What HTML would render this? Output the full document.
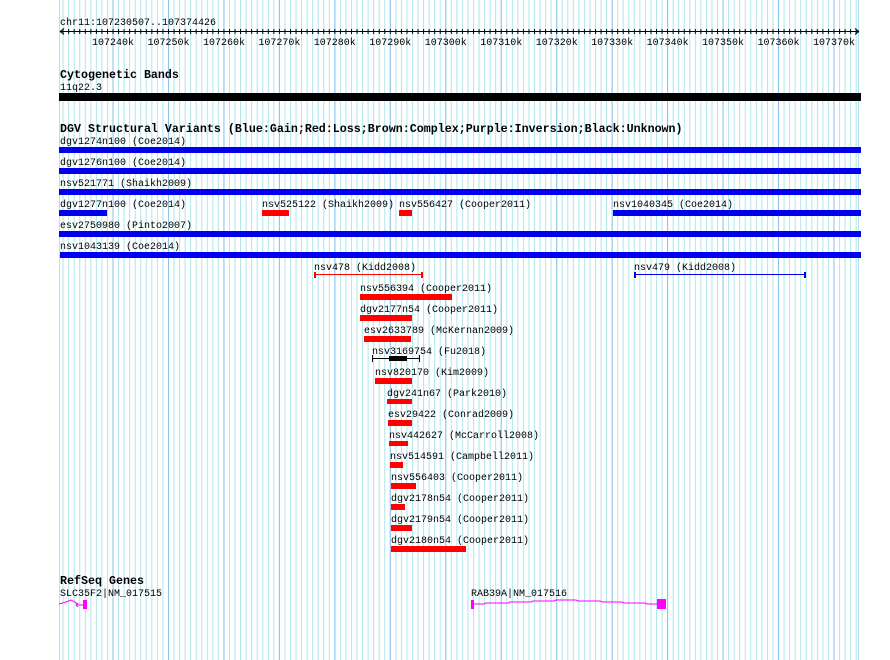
<!DOCTYPE html>
<html><head><meta charset="utf-8"><style>
html,body{margin:0;padding:0;background:#fff;width:890px;height:660px;overflow:hidden}
svg{display:block}
text{font-family:"Liberation Mono",monospace;font-size:10px;fill:#000}
.b{font-weight:bold;font-size:11.67px}
</style></head><body>
<svg width="890" height="660" viewBox="0 0 890 660" xmlns="http://www.w3.org/2000/svg">
<defs>
<pattern id="mn" patternUnits="userSpaceOnUse" x="62.6" y="0" width="5.546" height="660"><rect x="0" y="0" width="1" height="660" fill="#aee6ee"/></pattern>
<pattern id="mj" patternUnits="userSpaceOnUse" x="112.5" y="0" width="55.46" height="660"><rect x="0" y="0" width="1" height="660" fill="#8cc2ea"/></pattern>
</defs>
<rect x="59" y="0" width="801" height="660" fill="url(#mn)"/>
<rect x="59" y="0" width="801" height="660" fill="url(#mj)"/>
<rect x="59" y="0" width="1" height="660" fill="#aee6ee"/>
<rect x="858" y="0" width="1" height="660" fill="#aee6ee"/>

<text x="60" y="25">chr11:107230507..107374426</text>
<rect x="60" y="31" width="799" height="1" fill="#000"/>
<path d="M60 31.5 L64 28.5 M60 31.5 L64 34.5 M859 31.5 L855 28.5 M859 31.5 L855 34.5" stroke="#000" stroke-width="1"/>
<g id="ticks"></g>
<rect x="62.6" y="29" width="797" height="5" fill="url(#tk)"/>
<defs><pattern id="tk" patternUnits="userSpaceOnUse" x="62.6" y="29" width="5.546" height="5"><rect x="0" y="0" width="1" height="5" fill="#000"/></pattern></defs>
<g font-size="10">
<text x="113" y="45" text-anchor="middle">107240k</text>
<text x="168.5" y="45" text-anchor="middle">107250k</text>
<text x="224" y="45" text-anchor="middle">107260k</text>
<text x="279.4" y="45" text-anchor="middle">107270k</text>
<text x="334.8" y="45" text-anchor="middle">107280k</text>
<text x="390.3" y="45" text-anchor="middle">107290k</text>
<text x="445.8" y="45" text-anchor="middle">107300k</text>
<text x="501.2" y="45" text-anchor="middle">107310k</text>
<text x="556.7" y="45" text-anchor="middle">107320k</text>
<text x="612.1" y="45" text-anchor="middle">107330k</text>
<text x="667.6" y="45" text-anchor="middle">107340k</text>
<text x="723" y="45" text-anchor="middle">107350k</text>
<text x="778.5" y="45" text-anchor="middle">107360k</text>
<text x="834" y="45" text-anchor="middle">107370k</text>
</g>

<text class="b" x="60" y="78">Cytogenetic Bands</text>
<text x="60" y="90">11q22.3</text>
<rect x="59" y="93" width="802" height="8" fill="#000"/>

<text class="b" x="60" y="132">DGV Structural Variants (Blue:Gain;Red:Loss;Brown:Complex;Purple:Inversion;Black:Unknown)</text>
<text x="60" y="144">dgv1274n100 (Coe2014)</text>
<rect x="59" y="147" width="802" height="6" fill="#0000ee"/>
<text x="60" y="165">dgv1276n100 (Coe2014)</text>
<rect x="59" y="168" width="802" height="6" fill="#0000ee"/>
<text x="60" y="186">nsv521771 (Shaikh2009)</text>
<rect x="59" y="189" width="802" height="6" fill="#0000ee"/>
<text x="60" y="207">dgv1277n100 (Coe2014)</text>
<rect x="59" y="210" width="48" height="6" fill="#0000ee"/>
<text x="262" y="207">nsv525122 (Shaikh2009)</text>
<rect x="262" y="210" width="27" height="6" fill="#ff0000"/>
<text x="399" y="207">nsv556427 (Cooper2011)</text>
<rect x="399" y="210" width="13" height="6" fill="#ff0000"/>
<text x="613" y="207">nsv1040345 (Coe2014)</text>
<rect x="613" y="210" width="248" height="6" fill="#0000ee"/>
<text x="60" y="228">esv2750980 (Pinto2007)</text>
<rect x="59" y="231" width="802" height="6" fill="#0000ee"/>
<text x="60" y="249">nsv1043139 (Coe2014)</text>
<rect x="60" y="252" width="801" height="6" fill="#0000ee"/>

<text x="314" y="270">nsv478 (Kidd2008)</text>
<rect x="315" y="274" width="107" height="1" fill="#ff0000"/>
<rect x="314" y="272" width="2" height="6" fill="#ff0000"/>
<rect x="421" y="272" width="2" height="6" fill="#ff0000"/>
<text x="634" y="270">nsv479 (Kidd2008)</text>
<rect x="635" y="274" width="170" height="1" fill="#0000ee"/>
<rect x="634" y="272" width="2" height="6" fill="#0000ee"/>
<rect x="804" y="272" width="2" height="6" fill="#0000ee"/>

<text x="360" y="291">nsv556394 (Cooper2011)</text>
<rect x="360" y="294" width="92" height="6" fill="#ff0000"/>
<text x="360" y="312">dgv2177n54 (Cooper2011)</text>
<rect x="360" y="315" width="52" height="6" fill="#ff0000"/>
<text x="364" y="333">esv2633789 (McKernan2009)</text>
<rect x="364" y="336" width="47" height="6" fill="#ff0000"/>
<text x="372" y="354">nsv3169754 (Fu2018)</text>
<rect x="373" y="358" width="46" height="1" fill="#000"/>
<rect x="372" y="355" width="1" height="7" fill="#000"/>
<rect x="419" y="355" width="1" height="7" fill="#000"/>
<rect x="389" y="356" width="18" height="5" fill="#000"/>
<text x="375" y="375">nsv820170 (Kim2009)</text>
<rect x="375" y="378" width="37" height="6" fill="#ff0000"/>
<text x="387" y="396">dgv241n67 (Park2010)</text>
<rect x="387" y="399" width="25" height="5" fill="#ff0000"/>
<text x="388" y="417">esv29422 (Conrad2009)</text>
<rect x="388" y="420" width="24" height="6" fill="#ff0000"/>
<text x="389" y="438">nsv442627 (McCarroll2008)</text>
<rect x="389" y="441" width="19" height="5" fill="#ff0000"/>
<text x="390" y="459">nsv514591 (Campbell2011)</text>
<rect x="390" y="462" width="13" height="6" fill="#ff0000"/>
<text x="391" y="480">nsv556403 (Cooper2011)</text>
<rect x="391" y="483" width="25" height="6" fill="#ff0000"/>
<text x="391" y="501">dgv2178n54 (Cooper2011)</text>
<rect x="391" y="504" width="14" height="6" fill="#ff0000"/>
<text x="391" y="522">dgv2179n54 (Cooper2011)</text>
<rect x="391" y="525" width="21" height="6" fill="#ff0000"/>
<text x="391" y="543">dgv2180n54 (Cooper2011)</text>
<rect x="391" y="546" width="75" height="6" fill="#ff0000"/>

<text class="b" x="60" y="584">RefSeq Genes</text>
<text x="60" y="596">SLC35F2|NM_017515</text>
<path d="M59 604 L66 602 L71 600 L75 602 L78 605 L83 605" stroke="#ff00ff" fill="none" stroke-width="1"/>
<path d="M78 603 L76 605 L78 607" stroke="#ff00ff" fill="none"/>
<rect x="83" y="600" width="4" height="9" fill="#ff00ff"/>
<text x="471" y="596">RAB39A|NM_017516</text>
<rect x="471" y="600" width="3" height="9" fill="#ff00ff"/>
<path d="M474 604 L484 604 L486 603 L508 603 L510 602 L531 602 L533 601 L554 601 L556 600 L576 600 L578 601 L600 601 L602 602 L622 602 L624 603 L645 603 L647 604 L657 604" stroke="#ff00ff" fill="none"/>
<rect x="657" y="599" width="9" height="10" fill="#ff00ff"/>
</svg>
</body></html>
